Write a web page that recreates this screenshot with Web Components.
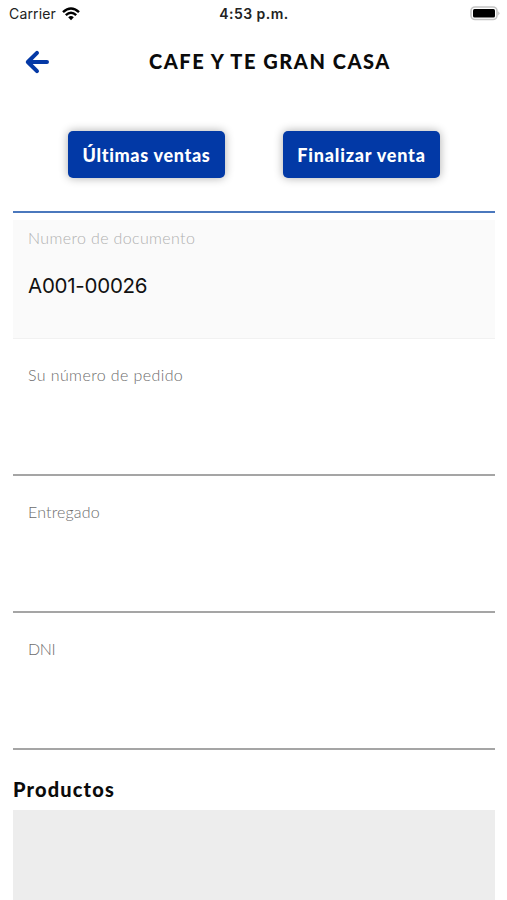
<!DOCTYPE html>
<html lang="es"><head><meta charset="utf-8"><title>Venta</title>
<style>
html,body{margin:0;height:100%;background:#fff;overflow:hidden}
</style></head><body><sale-screen></sale-screen>
<script>
const define=(name,html)=>customElements.define(name,class extends HTMLElement{
  constructor(){super();const t=document.createElement('template');t.innerHTML=html;this.attachShadow({mode:'open'}).append(t.content.cloneNode(true));}
});
define('status-bar',`<style>
:host{display:grid;grid-template-columns:1fr auto 1fr;align-items:center;height:27px;padding:0 7px 0 9px;box-sizing:border-box;font:14px Inter,sans-serif;color:#222}
.l{display:flex;align-items:center;gap:6px;letter-spacing:.15px}
.t{font-weight:600;font-size:14px;letter-spacing:.45px;margin-right:1px}
.r{justify-self:end;display:flex}svg{display:block}
</style><div class="l"><span>Carrier</span><svg width="18" height="14" viewBox="0 0 18 14" fill="none" stroke="#000" stroke-width="2.5"><path d="M1 5.1Q9-2.1 17 5.1M3.8 8.1Q9 3.5 14.2 8.1"/><path d="M6.2 10.2Q9 8 11.8 10.2L9 13.3Z" fill="#000" stroke="none"/></svg></div>
<span class="t">4:53 p.m.</span>
<div class="r"><svg width="31" height="15" viewBox="0 0 31 15"><rect x="2" y="1" width="26" height="12.5" rx="4" fill="#fff" stroke="#c4c4c4" stroke-width="1.6"/><rect x="4" y="3" width="22" height="8.6" rx="1.5" fill="#000"/><path d="M29.4 5.2q2 2 0 4.2z" fill="#b0b0b0"/></svg></div>`);
define('nav-header',`<style>
:host{display:grid;grid-template-columns:62px 1fr 32px;align-items:center;height:69px;box-sizing:border-box;font:900 20px Lato,sans-serif;color:#0b0b0b}
svg{display:block;margin-left:24px}.t{white-space:nowrap;justify-self:start;letter-spacing:1.55px;margin:-2px 0 0 87px}
</style><svg width="26" height="26" viewBox="0 0 26 26" fill="none" stroke="#0439a6" stroke-width="4" stroke-linecap="round" stroke-linejoin="round"><path d="M13 3.8 3.8 13l9.2 9.2M4 13H23"/></svg><span class="t"><slot></slot></span>`);
define('action-button',`<style>
:host{display:flex;align-items:center;justify-content:center;width:157px;height:47px;border-radius:5px;background:#0239a6;color:#fff;font:900 18px Lato,sans-serif;letter-spacing:var(--track);white-space:nowrap;box-shadow:0 0 10px rgba(0,0,0,.33)}
</style><span><slot></slot></span>`);
define('form-field',`<style>
:host{display:block;height:137.2px;box-sizing:border-box;border-bottom:2px solid #a5a5a5;padding:26.5px 15px 0;font:300 16px/20px Lato,sans-serif;color:#6c6c6c}
:host([disabled]){height:119px;margin-top:7px;padding-top:8px;background:#fafafa;border-bottom:1px solid #f1f1f1;color:#b0b0b0}
.l{letter-spacing:var(--track)}
.v{font:400 20.5px/28px Inter,sans-serif;color:#111;margin-top:24.5px;letter-spacing:var(--vtrack)}
</style><div class="l"><slot name="label"></slot></div><div class="v"><slot></slot></div>`);
define('product-section',`<style>
:host{display:flex;flex-direction:column;flex:1}
h2{margin:26px 0 8px;font:900 20px/26px Lato,sans-serif;color:#0b0b0b;letter-spacing:1.15px}
.b{flex:1;background:#ededed}
</style><h2><slot></slot></h2><div class="b"></div>`);
define('sale-screen',`<style>
:host{display:flex;flex-direction:column;height:900px;width:507px;background:#fff}
.a{display:flex;gap:58px;padding:35px 0 32.5px 68px;height:47px}
main{display:flex;flex-direction:column;flex:1;margin:0 12px 0 13px;border-top:2px solid #4b78bd}
</style><status-bar></status-bar><nav-header>CAFE Y TE GRAN CASA</nav-header>
<div class="a"><action-button style="--track:.68px">Últimas ventas</action-button><action-button style="--track:.8px">Finalizar venta</action-button></div>
<main><form-field disabled style="--track:.36px;--vtrack:-.25px"><span slot="label">Numero de documento</span>A001-00026</form-field>
<form-field style="--track:.4px"><span slot="label">Su número de pedido</span></form-field>
<form-field style="--track:.15px"><span slot="label">Entregado</span></form-field>
<form-field style="--track:-.4px"><span slot="label">DNI</span></form-field>
<product-section>Productos</product-section></main>`);
</script></body></html>
